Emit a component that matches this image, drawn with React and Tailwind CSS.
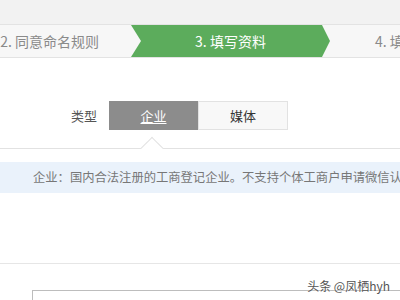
import React from "react"

const font = { fontFamily: '"Noto Sans CJK SC", "Noto Sans", sans-serif' }

function StepBar() {
  return (
    <div className="flex h-[34px] bg-[#f7f7f7] border-y border-[#e3e3e3] overflow-hidden whitespace-nowrap text-[14px]">
      <div className="w-[131px] shrink-0 flex items-center justify-end pr-[32px] text-[#8a8a8a]">
        2. 同意命名规则
      </div>
      <div className="w-[199px] shrink-0 flex items-center justify-center bg-[#5cac5c] text-white [clip-path:polygon(0_0,191px_0,100%_50%,191px_100%,0_100%,10px_50%)]">
        3. 填写资料
      </div>
      <div className="flex items-center pl-[45px] text-[#8a8a8a]">
        4. 填写资料
      </div>
    </div>
  )
}

function TypePicker() {
  return (
    <div className="flex items-center mt-[43px] h-[29px]">
      <span className="w-[109px] pr-[12px] text-right text-[13px] text-[#555]">类型</span>
      <div className="w-[89px] h-full flex items-center justify-center bg-[#8c8c8c] text-white text-[13px] underline underline-offset-2">
        企业
      </div>
      <div className="w-[90px] h-full flex items-center justify-center bg-[#f8f8f8] border border-[#e2e2e2] text-[#333] text-[13px]">
        媒体
      </div>
    </div>
  )
}

export default function App() {
  return (
    <div className="w-[400px] h-[300px] bg-white relative overflow-hidden" style={font}>
      <div className="h-[24px] bg-[#f2f2f2]" />
      <StepBar />

      <TypePicker />

      <div className="relative mt-[18px] border-t border-[#e2e2e2] pt-[13px]">
        <div className="absolute left-[144px] -top-[9px] w-[16px] h-[16px] bg-white border-t border-l border-[#e2e2e2] rotate-45" />
        <div className="h-[31px] bg-[#eaf2fb] flex items-center pl-[33px] whitespace-nowrap text-[12.3px] text-[#777]">
          企业：国内合法注册的工商登记企业。不支持个体工商户申请微信认证。
        </div>
      </div>

      <div className="mt-[70px] border-t border-[#e6e6e6]" />

      <div className="ml-[32px] mt-[26px] h-[40px] border-t border-l border-[#bdbdbd]" />

      <div className="absolute right-[10px] bottom-[5px] text-[12px] text-[#555] [text-shadow:0_0_2px_#fff]">
        头条 @凤栖hyh
      </div>
    </div>
  )
}
